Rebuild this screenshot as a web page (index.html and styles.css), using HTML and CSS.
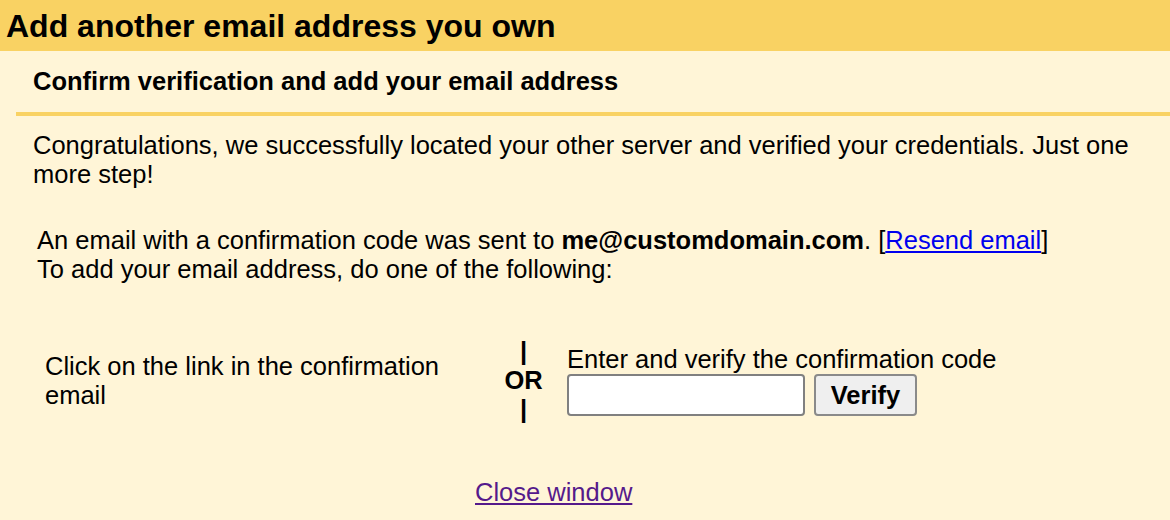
FILE: index.html
```html
<!DOCTYPE html>
<html>
<head>
<meta charset="utf-8">
<link rel="stylesheet" href="styles.css">
</head>
<body>
<div class="header"><h1 class="title">Add another email address you own</h1></div>
<div class="panel">
  <div class="subhead">Confirm verification and add your email address</div>
  <div class="content">
    <p class="intro">Congratulations, we successfully located your other server and verified your credentials. Just one more step!</p>
    <div class="sent">An email with a confirmation code was sent to <b>me@customdomain.com</b>. [<a class="resend" href="#">Resend email</a>]<br>To add your email address, do one of the following:</div>
    <div class="options">
      <div class="opt-left">Click on the link in the confirmation email</div>
      <div class="opt-or">|<br>OR<br>|</div>
      <div class="opt-right">
        <div class="opt-label">Enter and verify the confirmation code</div>
        <div class="verify-row">
          <input class="code-input" type="text">
          <button class="verify-btn" type="button">Verify</button>
        </div>
      </div>
    </div>
    <div class="close-row"><a class="close-link" href="#">Close window</a></div>
  </div>
</div>
</body>
</html>
```

FILE: styles.css
```css
html, body {
  margin: 0;
  padding: 0;
  background: #fff5d7;
  color: #000;
  font-family: "Liberation Sans", Arial, Helvetica, sans-serif;
  font-size: 25.5px;
}

.header {
  background: #f9d263;
  height: 51px;
  box-sizing: border-box;
  padding: 8px 6px 0;
}

.title {
  margin: 0;
  font-size: 32px;
  font-weight: bold;
  line-height: 37px;
}

.panel {
  margin-left: 16px;
}

.subhead {
  font-weight: bold;
  padding: 16px 0 0 17px;
  height: 65px;
  box-sizing: border-box;
  border-bottom: 4px solid #f9d263;
}

.content {
  padding: 0 20px 0 17px;
}

.intro {
  margin: 15px 0 0;
  line-height: 29px;
}

.sent {
  margin-top: 37px;
  padding-left: 4px;
  line-height: 29px;
}

.resend {
  color: #0000ee;
  text-decoration: underline;
}

.options {
  display: flex;
  align-items: center;
  margin-top: 53px;
  padding-left: 12px;
}

.opt-left {
  width: 440px;
  line-height: 29px;
}

.opt-or {
  width: 77px;
  text-align: center;
  font-weight: bold;
  line-height: 29px;
}

.opt-right {
  padding-left: 5px;
  line-height: 29px;
}

.verify-row {
  display: flex;
  gap: 9px;
}

.code-input {
  width: 238px;
  height: 42px;
  box-sizing: border-box;
  border: 2px solid #808080;
  border-radius: 4px;
  background: #fff;
  font: inherit;
  padding: 0 6px;
}

.verify-btn {
  width: 103px;
  height: 42px;
  box-sizing: border-box;
  border: 2px solid #8a8a8a;
  border-radius: 4px;
  background: #efefef;
  font: inherit;
  font-weight: bold;
  color: #000;
  padding: 0;
}

.close-row {
  margin-top: 54px;
  padding-left: 442px;
  line-height: 29px;
}

.close-link {
  color: #551a8b;
  text-decoration: underline;
}
```
